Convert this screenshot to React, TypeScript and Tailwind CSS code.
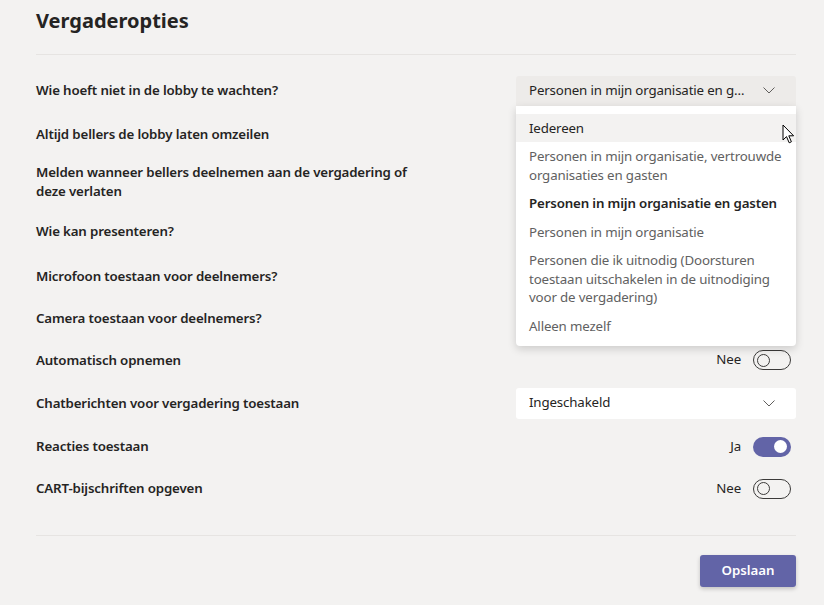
import React from 'react';

const font = { fontFamily: '"Segoe UI", "Noto Sans", "Open Sans", sans-serif' };

type Control =
  | { kind: 'toggle'; on: boolean; hidden?: boolean }
  | { kind: 'select'; value: string; open?: boolean; hidden?: boolean };

interface Row {
  label: string;
  h: string;
  control: Control;
}

// rijen onder het open menu zijn toch bedekt
const rows: Row[] = [
  { label: 'Wie hoeft niet in de lobby te wachten?', h: 'h-[43px]', control: { kind: 'select', value: 'Personen in mijn organisatie en gasten', open: true } },
  { label: 'Altijd bellers de lobby laten omzeilen', h: 'h-[45px]', control: { kind: 'toggle', on: false, hidden: true } },
  { label: 'Melden wanneer bellers deelnemen aan de vergadering of deze verlaten', h: 'h-[50px]', control: { kind: 'toggle', on: true, hidden: true } },
  { label: 'Wie kan presenteren?', h: 'h-[48px]', control: { kind: 'select', value: 'Iedereen', hidden: true } },
  { label: 'Microfoon toestaan voor deelnemers?', h: 'h-[43px]', control: { kind: 'toggle', on: true, hidden: true } },
  { label: 'Camera toestaan voor deelnemers?', h: 'h-[41px]', control: { kind: 'toggle', on: true, hidden: true } },
  { label: 'Automatisch opnemen', h: 'h-[42px]', control: { kind: 'toggle', on: false } },
  { label: 'Chatberichten voor vergadering toestaan', h: 'h-[44px]', control: { kind: 'select', value: 'Ingeschakeld' } },
  { label: 'Reacties toestaan', h: 'h-[43px]', control: { kind: 'toggle', on: true } },
  { label: 'CART-bijschriften opgeven', h: 'h-[41px]', control: { kind: 'toggle', on: false } },
];

const options = [
  { text: 'Iedereen', hover: true },
  { text: 'Personen in mijn organisatie, vertrouwde organisaties en gasten' },
  { text: 'Personen in mijn organisatie en gasten', selected: true },
  { text: 'Personen in mijn organisatie' },
  { text: 'Personen die ik uitnodig (Doorsturen toestaan uitschakelen in de uitnodiging voor de vergadering)' },
  { text: 'Alleen mezelf' },
];

const Chevron = () => (
  <svg width="12" height="7" viewBox="0 0 12 7" fill="none" className="shrink-0">
    <path d="M0.5 0.5 L6 6 L11.5 0.5" stroke="#605e5c" strokeWidth="1" />
  </svg>
);

const Toggle = ({ on }: { on: boolean }) => (
  <div className="flex items-center gap-3">
    <span className="text-[13.3px] tracking-[-0.15px] text-[#252423]">{on ? 'Ja' : 'Nee'}</span>
    <div
      className={
        on
          ? 'w-[38px] h-[20px] rounded-full bg-[#6264a7] flex items-center justify-end px-[4px]'
          : 'w-[38px] h-[20px] rounded-full border border-[#3b3a39] flex items-center justify-start px-[3px]'
      }
    >
      <div
        className={
          on
            ? 'w-[13px] h-[13px] rounded-full bg-white'
            : 'w-[13px] h-[13px] rounded-full border border-[#3b3a39]'
        }
      />
    </div>
  </div>
);

const Cursor = () => (
  <svg width="14" height="21" viewBox="0 0 14 21" className="absolute right-[0px] top-[18px]">
    <path
      d="M1 1 L1 16 L4.5 12.6 L7.2 18.8 L9.4 17.8 L6.8 11.8 L11.6 11.8 Z"
      fill="#fff"
      stroke="#000"
      strokeWidth="1"
      strokeLinejoin="round"
    />
  </svg>
);

const Select = ({ value, open }: { value: string; open?: boolean }) => (
  <div className="relative w-[280px]">
    <div
      className={
        open
          ? 'h-[30px] rounded-t-[3px] bg-[#edebe9] flex items-center justify-between pl-[13px] pr-[21px]'
          : 'h-[31px] rounded-[3px] bg-white flex items-center justify-between pl-[13px] pr-[21px]'
      }
    >
      <span className="text-[13.3px] tracking-[-0.15px] text-[#252423] truncate pr-[14px]">{value}</span>
      <Chevron />
    </div>
    {open && (
      <div className="absolute left-0 top-full w-full z-10 bg-white rounded-b-[4px] shadow-[0_3px_8px_rgba(0,0,0,0.16)] pt-[8px] pb-[6px]">
        {options.map((o) => (
          <div
            key={o.text}
            className={
              'pl-[13px] pr-[12px] py-[5px] text-[13.3px] tracking-[-0.15px] leading-[18.5px] ' +
              (o.hover ? 'bg-[#f3f2f1] text-[#252423] ' : '') +
              (o.selected ? 'font-semibold text-[#252423] ' : '') +
              (!o.hover && !o.selected ? 'text-[#616161]' : '')
            }
          >
            {o.text}
          </div>
        ))}
        <Cursor />
      </div>
    )}
  </div>
);

export default function App() {
  return (
    <div className="w-[824px] h-[605px] bg-[#f3f2f1] overflow-hidden" style={font}>
      <div className="pl-[36px] pr-[28px]">
        <h1 className="pt-[7px] text-[20px] leading-[28px] font-bold text-[#252423]">Vergaderopties</h1>
        <div className="mt-[19px] border-t border-[#e6e4e2]" />
        <div className="mt-[14px] flex flex-col">
          {rows.map((r) => (
            <div key={r.label} className={'flex items-center justify-between ' + r.h}>
              <div className="w-[385px] text-[13.3px] tracking-[-0.15px] leading-[19px] font-semibold text-[#252423]">{r.label}</div>
              <div className={r.control.hidden ? 'flex justify-end invisible' : 'flex justify-end'}>
                {r.control.kind === 'toggle' ? (
                  <div className="pr-[5px]">
                    <Toggle on={r.control.on} />
                  </div>
                ) : (
                  <Select value={r.control.value} open={r.control.open} />
                )}
              </div>
            </div>
          ))}
        </div>
        <div className="mt-[26px] border-t border-[#e6e4e2]" />
        <div className="mt-[19px] flex justify-end">
          <button className="w-[96px] h-[32px] rounded-[3px] bg-[#6264a7] text-white text-[13.3px] font-semibold shadow-[0_2px_4px_rgba(0,0,0,0.2)]">
            Opslaan
          </button>
        </div>
      </div>
    </div>
  );
}
